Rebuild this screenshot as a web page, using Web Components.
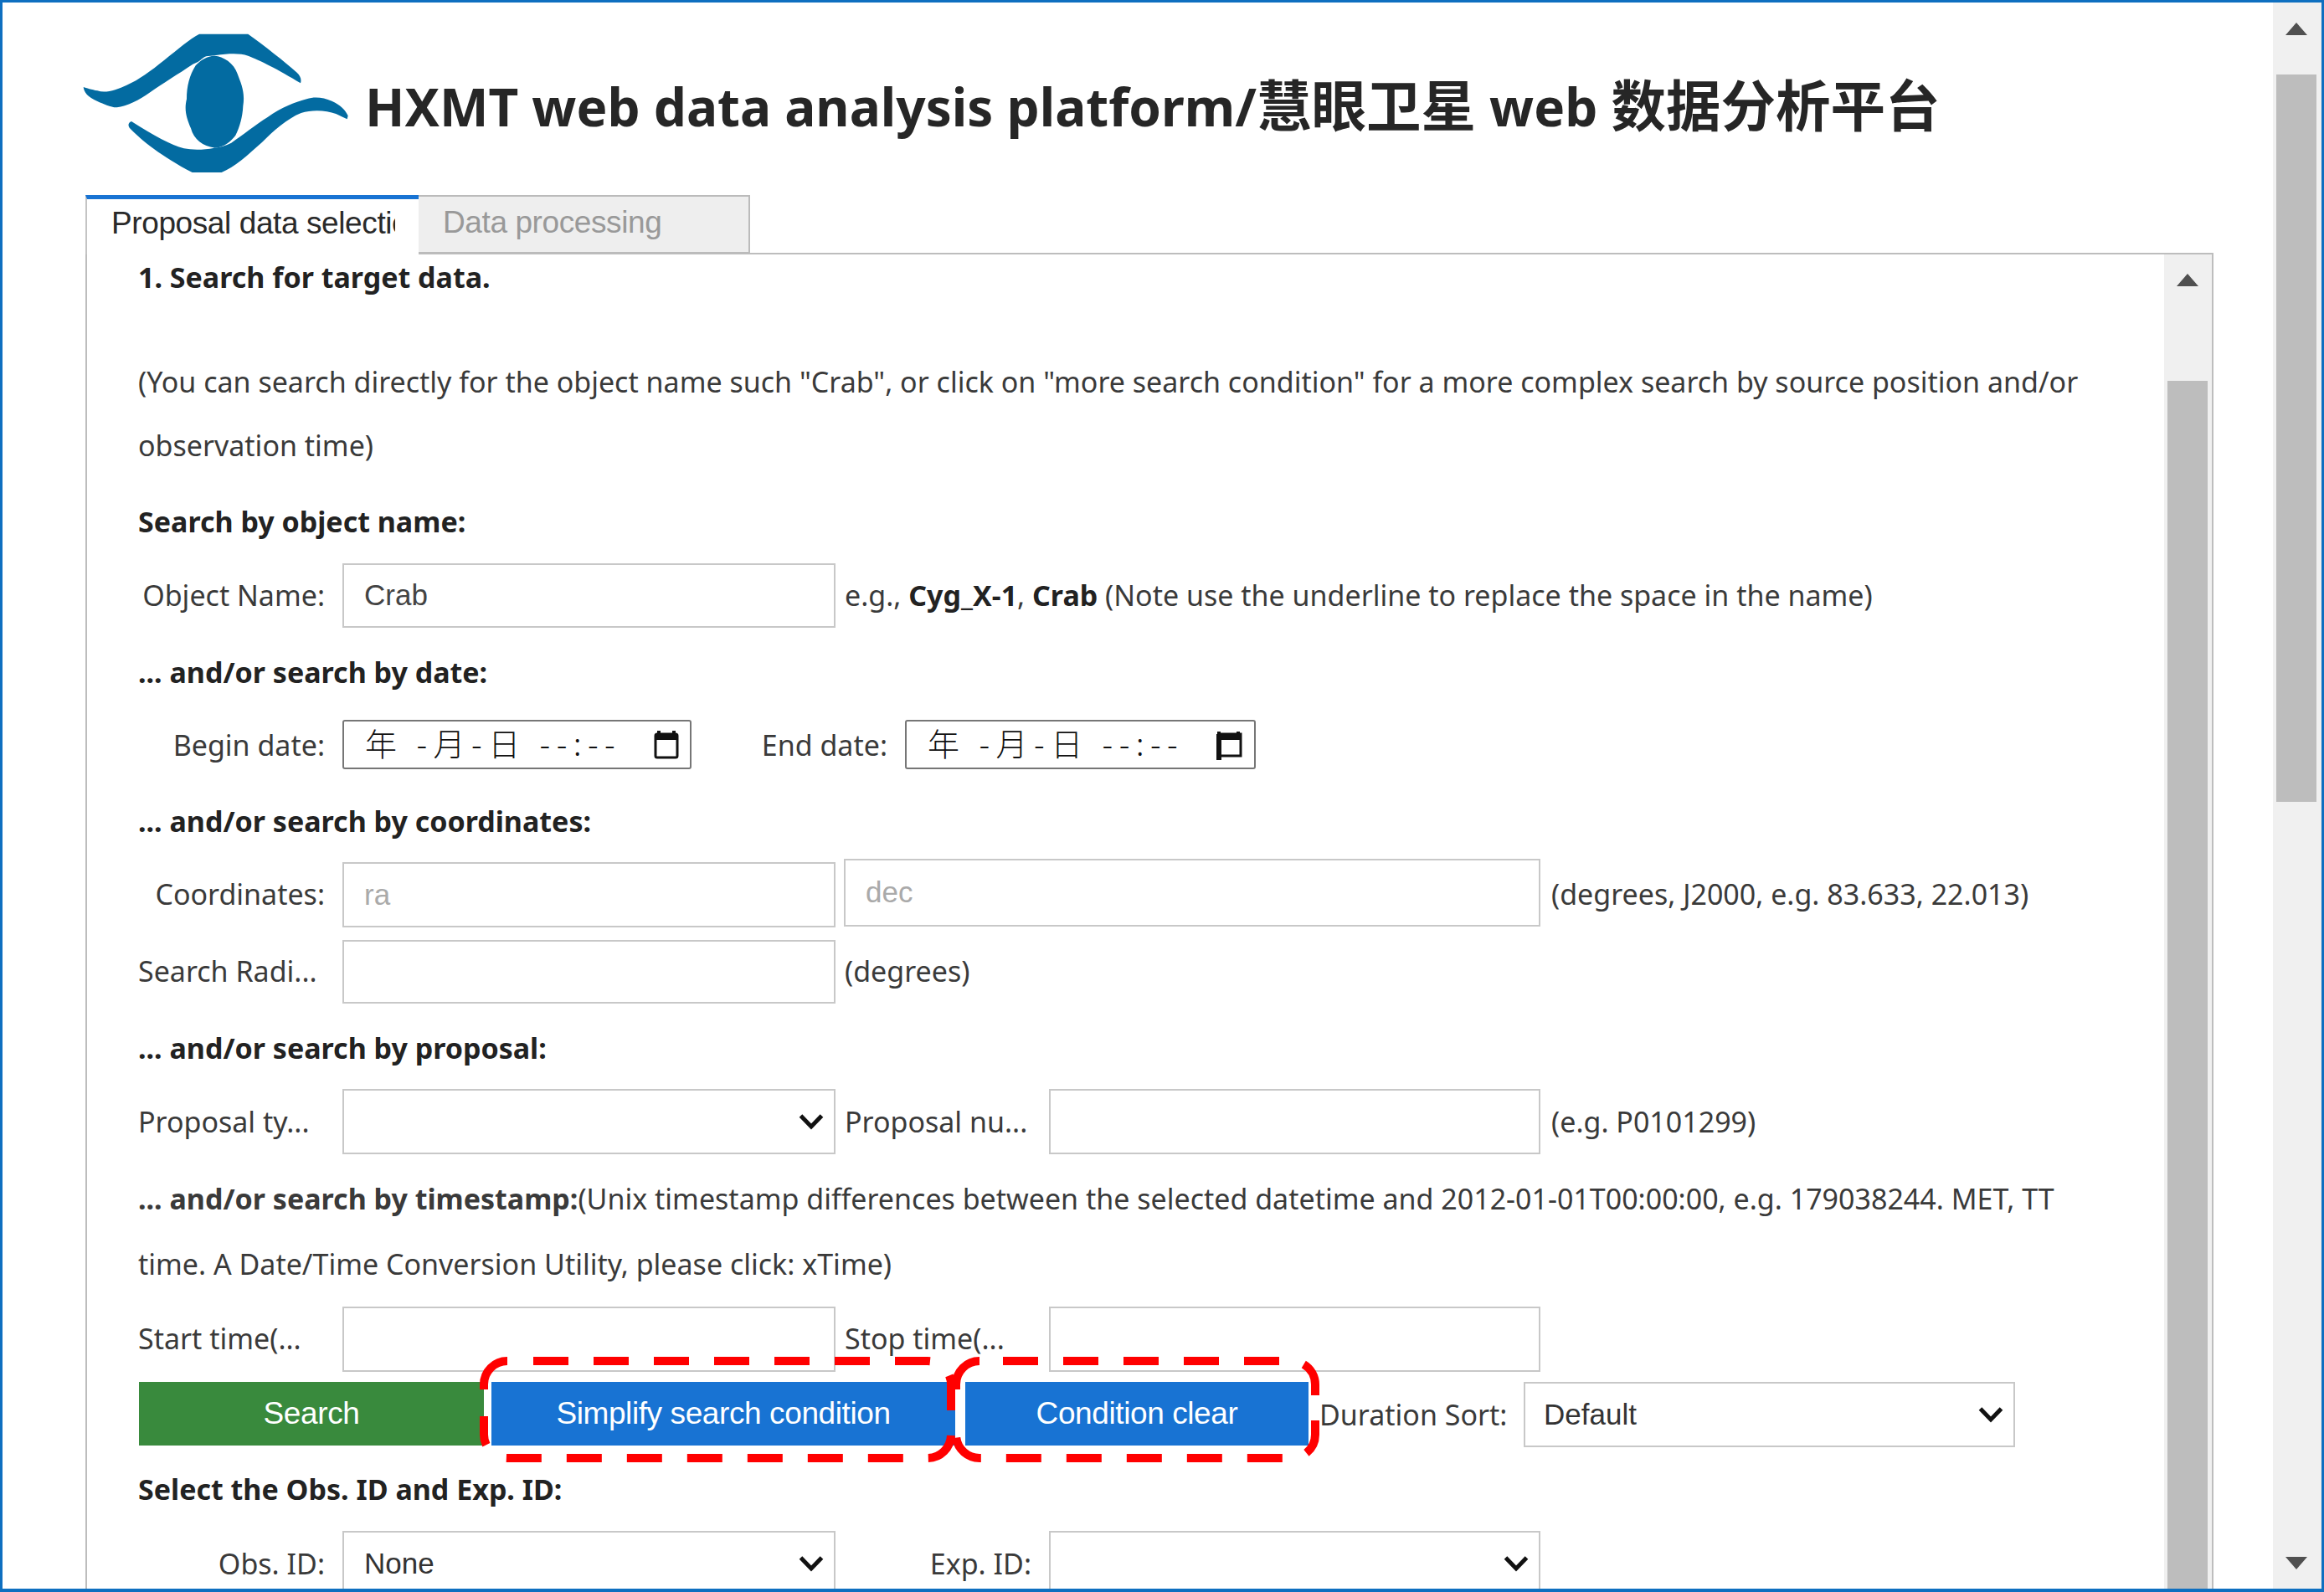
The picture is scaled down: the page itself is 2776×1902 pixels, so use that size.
<!DOCTYPE html>
<html lang="en">
<head>
<meta charset="utf-8">
<title>HXMT web data analysis platform</title>
<style>
  html, body { margin: 0; padding: 0; background: #fff; overflow: hidden; }
</style>
</head>
<body>
<hx-app>
  <hx-step>1. Search for target data.</hx-step>
  <hx-para style="--mt:60px">(You can search directly for the object name such "Crab", or click on "more search condition" for a more complex search by source position and/or<br>observation time)</hx-para>

  <hx-head style="--mt:26px">Search by object name:</hx-head>
  <hx-row style="--mt:23px;--h:77px">
    <hx-label style="margin-top:-2px">Object Name:</hx-label>
    <hx-input style="padding-bottom:2px">Crab</hx-input>
    <hx-note style="margin-top:-2px">e.g., <b>Cyg_X-1</b>, <b>Crab</b> (Note use the underline to replace the space in the name)</hx-note>
  </hx-row>

  <hx-head style="--mt:26px">... and/or search by date:</hx-head>
  <hx-row style="--mt:30px;--h:59px">
    <hx-label>Begin date:</hx-label>
    <hx-date style="width:417px"></hx-date>
    <hx-label style="width:234px">End date:</hx-label>
    <hx-date style="width:419px" alt></hx-date>
  </hx-row>

  <hx-head style="--mt:35px">... and/or search by coordinates:</hx-head>
  <hx-row style="--mt:19px;--h:81px">
    <hx-label>Coordinates:</hx-label>
    <hx-input placeholder style="margin-top:3px;height:78px">ra</hx-input>
    <hx-input placeholder style="width:832px;margin-left:10px;margin-top:-3px">dec</hx-input>
    <hx-note style="margin-left:13px">(degrees, J2000, e.g. 83.633, 22.013)</hx-note>
  </hx-row>
  <hx-row style="--mt:15px;--h:76px">
    <hx-label left style="margin-top:-3px">Search Radi...</hx-label>
    <hx-input></hx-input>
    <hx-note style="margin-top:-3px">(degrees)</hx-note>
  </hx-row>

  <hx-head style="--mt:26px">... and/or search by proposal:</hx-head>
  <hx-row style="--mt:22px;--h:78px">
    <hx-label left>Proposal ty...</hx-label>
    <hx-select></hx-select>
    <hx-label left style="width:224px;margin-left:11px;margin-right:20px">Proposal nu...</hx-label>
    <hx-input style="width:587px"></hx-input>
    <hx-note style="margin-left:13px">(e.g. P0101299)</hx-note>
  </hx-row>

  <hx-para style="--mt:14px;--lh:78px"><b>... and/or search by timestamp:</b>(Unix timestamp differences between the selected datetime and 2012-01-01T00:00:00, e.g. 179038244. MET, TT<br>time. A Date/Time Conversion Utility, please click: xTime)</hx-para>

  <hx-row style="--mt:12px;--h:78px">
    <hx-label left style="margin-top:-3px">Start time(...</hx-label>
    <hx-input></hx-input>
    <hx-label left style="width:224px;margin-left:11px;margin-right:20px;margin-top:-3px">Stop time(...</hx-label>
    <hx-input style="width:587px"></hx-input>
  </hx-row>

  <hx-row style="--mt:12px;--h:78px;align-items:flex-start">
    <hx-button style="width:412px;margin-left:1px;--bg:#398a3d">Search</hx-button>
    <hx-button style="width:554px;margin-left:9px;--bg:#1873d3">Simplify search condition</hx-button>
    <hx-button style="width:410px;margin-left:12px;--bg:#1873d3">Condition clear</hx-button>
    <hx-note style="margin-left:13px;width:244px;line-height:78px">Duration Sort:</hx-note>
    <hx-select style="width:587px;padding-left:22px">Default</hx-select>
  </hx-row>

  <hx-head style="--mt:23px">Select the Obs. ID and Exp. ID:</hx-head>
  <hx-row style="--mt:23px;--h:78px">
    <hx-label>Obs. ID:</hx-label>
    <hx-select>None</hx-select>
    <hx-label style="width:234px">Exp. ID:</hx-label>
    <hx-select style="width:587px"></hx-select>
  </hx-row>
</hx-app>

<script>
function def(name, css, html) {
  customElements.define(name, class extends HTMLElement {
    connectedCallback() {
      if (this.shadowRoot) return;
      this.attachShadow({ mode: 'open' });
      this.shadowRoot.innerHTML = '<style>' + css + '</style>' + html(this);
    }
  });
}

const SANS = '"Liberation Sans", Arial, sans-serif';

def('hx-logo', ':host{display:block;width:320px;height:168px} svg{display:block}', () => `
  <svg width="320" height="168" viewBox="55 60 960 504" fill="#036ba1">
    <path d="M60 252 C62 270 75 288 110 303 C130 312 160 326 180 325 C215 320 260 300 300 270 C345 238 400 205 452 170 L470 162 C480 158 484 148 500 142 L535 138 C580 132 620 130 650 140 C690 155 760 190 838 238 C842 225 838 212 825 200 C780 160 710 105 650 62 L475 62 C440 80 400 115 350 155 C300 195 260 225 215 245 C180 262 140 275 110 265 C90 262 70 255 60 252 Z"/>
    <path d="M530 140 C560 142 600 165 612 205 C625 240 640 270 632 320 C630 360 620 395 605 425 C590 445 565 468 530 470 C490 465 455 440 445 400 C430 365 420 335 430 295 C430 250 440 210 462 175 C480 155 505 140 530 140 Z"/>
    <path d="M1008 355 C1000 335 980 315 950 302 C920 290 890 285 860 295 C820 305 770 325 720 360 C680 385 630 425 590 452 C570 462 550 468 530 470 C490 478 450 478 420 472 C375 460 310 425 232 375 C222 378 218 388 225 398 C270 445 340 500 450 558 L555 558 C600 540 650 495 700 450 C740 410 790 365 840 345 C880 332 930 335 965 348 C980 355 995 362 1005 367 Z"/>
  </svg>`);

def('hx-scrollbar',
  `:host{display:flex;flex-direction:column;flex:none;width:var(--w,58px);background:#f0f0f0;box-sizing:border-box;padding-left:4px;padding-right:var(--pr,6px);overflow:hidden}
   svg{display:block;margin:var(--arrow-top,24px) auto 0;flex:none}
   .thumb{flex:none;background:#bdbdbd;height:var(--thumb,869px);margin-top:var(--thumb-top,47px)}
   .rest{flex:1}
   .down{margin:0 auto 23px}`,
  el => `
  <svg width="26" height="15" viewBox="0 0 26 15"><path d="M13 0 L26 15 H0 Z" fill="#505050"/></svg>
  <div class="thumb"></div>
  <div class="rest"></div>
  ${el.hasAttribute('nodown') ? '' : '<svg class="down" width="26" height="15" viewBox="0 0 26 15"><path d="M0 0 H26 L13 15 Z" fill="#505050"/></svg>'}`);

def('hx-tabs',
  `:host{display:flex;flex:none;height:71px;margin:26px 0 -2px 4px;position:relative;z-index:1;font:37px/1 ${SANS};letter-spacing:-.4px}
   .tab{box-sizing:border-box;display:flex;align-items:center}
   .on{width:398px;height:71px;background:#fff;border-top:5px solid #1873d3;border-left:2px solid #c4c4c4;padding-left:29px;padding-bottom:8px;color:#2a2a2a}
   .on span{display:block;width:339px;overflow:hidden;white-space:nowrap;line-height:46px}
   .off{width:396px;height:70px;background:#eee;border:2px solid #bbb;border-left:0;padding-left:29px;padding-bottom:6px;color:#999}`,
  () => `<div class="tab on"><span>Proposal data selection</span></div><div class="tab off">Data processing</div>`);

def('hx-app',
  `:host{display:flex;box-sizing:border-box;width:2776px;height:1902px;border:solid #0e6fc0;border-width:3px 3px 4px 3px;background:#fff;overflow:hidden;color:#3a3a3a;
     font-family:"Noto Sans","Noto Sans CJK SC",sans-serif;font-size:34px}
   main{flex:1;min-width:0;display:flex;flex-direction:column;padding:37px 71px 0 95px}
   header{display:flex;align-items:flex-start;flex:none;height:167px}
   h1{margin:45px 0 0 18px;font-size:62px;line-height:82px;font-weight:700;color:#262626;white-space:nowrap}
   h1 span{font-size:65.5px}
   .panel{flex:1;min-height:0;display:flex;margin-left:4px;border:2px solid #bdbdbd;border-bottom:0}
   .form{flex:1;min-width:0;padding-left:61px;overflow:hidden}`,
  () => `
  <main>
    <header><hx-logo></hx-logo><h1>HXMT web data analysis platform/<span>慧眼卫星</span> web <span>数据分析平台</span></h1></header>
    <hx-tabs></hx-tabs>
    <div class="panel">
      <div class="form"><slot></slot></div>
      <hx-scrollbar nodown style="--w:57px;--pr:5px;--arrow-top:23px;--thumb-top:113px;--thumb:1700px"></hx-scrollbar>
    </div>
  </main>
  <hx-scrollbar></hx-scrollbar>
  <hx-mark left="578" right="1136" start="637"></hx-mark>
  <hx-mark left="1142" right="1571" start="1198"></hx-mark>`);

def('hx-step', ':host{display:block;font-weight:700;line-height:54px;color:#222;white-space:nowrap}', () => '<slot></slot>');
def('hx-head', ':host{display:block;margin-top:var(--mt,0);font-weight:700;line-height:54px;color:#222;white-space:nowrap}', () => '<slot></slot>');
def('hx-para', ':host{display:block;margin-top:var(--mt,0);line-height:var(--lh,76px);white-space:nowrap}', () => '<slot></slot>');
def('hx-row', ':host{display:flex;align-items:center;margin-top:var(--mt,0);height:var(--h,78px)}', () => '<slot></slot>');
def('hx-label',
  `:host{display:block;flex:none;width:223px;margin-right:21px;text-align:right;white-space:nowrap}
   :host([left]){text-align:left}`,
  () => '<slot></slot>');
def('hx-note', ':host{display:block;flex:none;margin-left:11px;white-space:nowrap} ::slotted(b){color:#222}', () => '<slot></slot>');

def('hx-input',
  `:host{display:flex;align-items:center;flex:none;box-sizing:border-box;width:589px;height:var(--h,77px);border:2px solid #c8c8c8;padding-left:24px;font:35px ${SANS};color:#444;background:#fff}
   :host([placeholder]){color:#aaa}`,
  () => '<slot></slot>');

def('hx-select',
  `:host{display:flex;align-items:center;flex:none;box-sizing:border-box;width:589px;height:78px;border:2px solid #c8c8c8;padding:0 12px 0 24px;font:35px ${SANS};color:#333;background:#fff}
   div{flex:1}
   svg{display:block;flex:none}`,
  () => `<div><slot></slot></div><svg width="30" height="20" viewBox="0 0 30 20"><path d="M2.5 3 L15 16 L27.5 3" fill="none" stroke="#111" stroke-width="5"/></svg>`);

def('hx-date',
  `:host{display:flex;align-items:center;flex:none;box-sizing:border-box;height:59px;border:2px solid #767676;border-radius:3px;padding:0 13px 0 25px;background:#fff;color:#111;
     font:38px "Noto Sans CJK SC","Noto Sans",sans-serif}
   span{flex:1;white-space:pre;font-weight:300;letter-spacing:7.5px;line-height:50px;margin-top:-5px}
   svg{display:block;flex:none}`,
  el => `<span>年 -月-日 --:--</span>` + (el.hasAttribute('alt')
    ? `<svg width="34" height="36" viewBox="0 0 34 36"><path d="M5 2v4M28 2v4" stroke="#111" stroke-width="4"/><path d="M3 5 H31 V31 H7" fill="none" stroke="#111" stroke-width="3"/><rect x="2" y="5" width="6" height="31" fill="#111"/><rect x="3" y="5" width="28" height="7" fill="#111"/></svg>`
    : `<svg width="30" height="34" viewBox="0 0 30 34"><path d="M6 0v4M24 0v4" stroke="#111" stroke-width="4"/><rect x="2" y="4" width="26" height="28" rx="2" fill="none" stroke="#111" stroke-width="3"/><rect x="2" y="4" width="26" height="7" fill="#111"/></svg>`));

def('hx-button',
  `:host{display:flex;align-items:center;justify-content:center;flex:none;height:76px;background:var(--bg);color:#fff;font:37px ${SANS};letter-spacing:-.4px;white-space:nowrap}`,
  () => '<slot></slot>');

// red dashed highlight drawn over the buttons
customElements.define('hx-mark', class extends HTMLElement {
  connectedCallback() {
    this.attachShadow({ mode: 'open' });
    const x0 = +this.getAttribute('left'), x1 = +this.getAttribute('right'), start = +this.getAttribute('start');
    const y0 = 1626, y1 = 1742, r = 28;
    const pad = 8;
    const w = x1 - x0 + pad * 2, h = y1 - y0 + pad * 2;
    const corner = `M${x0} ${y0 + r + 6} V${y0 + r} A${r} ${r} 0 0 1 ${x0 + r} ${y0}`;
    const rest = `M${start} ${y0} H${x1 - r} A${r} ${r} 0 0 1 ${x1} ${y0 + r} V${y1 - r} A${r} ${r} 0 0 1 ${x1 - r} ${y1} H${x0 + r} A${r} ${r} 0 0 1 ${x0} ${y1 - r} V${y0 + r + 38}`;
    this.shadowRoot.innerHTML = `<style>
      :host{position:absolute;left:${x0 - pad}px;top:${y0 - pad}px;width:${w}px;height:${h}px;pointer-events:none}
      svg{display:block;overflow:visible}
    </style>
    <svg width="${w}" height="${h}" viewBox="${x0 - pad} ${y0 - pad} ${w} ${h}" fill="none" stroke="#ff0000" stroke-width="10">
      <path d="${corner}"/>
      <path d="${rest}" stroke-dasharray="42 30"/>
    </svg>`;
  }
});
</script>
</body>
</html>
